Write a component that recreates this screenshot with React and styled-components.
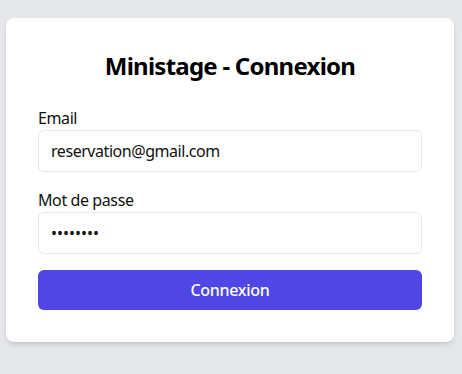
import React, { useState } from 'react';
import styled, { createGlobalStyle } from 'styled-components';

const GlobalStyle = createGlobalStyle`
    html, body {
        margin: 0;
        padding: 0;
        background: #e5e7eb;
        font-family: "Noto Sans", "Open Sans", sans-serif;
        color: #111827;
    }
    * {
        box-sizing: border-box;
    }
`;

const Page = styled.div`
    min-height: 374px;
    padding: 18px 8px 0 6px;
`;

const Card = styled.form`
    width: 448px;
    background: #ffffff;
    border-radius: 8px;
    box-shadow: 0 4px 6px -1px rgba(0, 0, 0, 0.1), 0 2px 4px -2px rgba(0, 0, 0, 0.1);
    padding: 32px;
`;

const Title = styled.h2`
    margin: 0 0 24px;
    font-size: 24px;
    line-height: 32px;
    font-weight: 700;
    letter-spacing: -0.75px;
    text-align: center;
    color: #000;
`;

const Field = styled.div`
    display: flex;
    flex-direction: column;
    margin-bottom: 16px;
`;

const Label = styled.label`
    font-size: 16px;
    line-height: 24px;
    letter-spacing: -0.4px;
    color: #111;
`;

const Input = styled.input`
    width: 100%;
    padding: 8px 12px;
    font: inherit;
    font-size: 16px;
    line-height: 24px;
    letter-spacing: ${p => (p.type === 'password' ? '0' : '-0.45px')};
    height: 42px;
    color: #111;
    border: 1px solid #e5e7eb;
    border-radius: 6px;
    outline: none;
    background: #fff;
`;

const Button = styled.button`
    width: 100%;
    height: 40px;
    border: none;
    border-radius: 6px;
    background: #4f46e5;
    color: #fff;
    font: inherit;
    font-size: 16px;
    font-weight: 500;
    letter-spacing: -0.3px;
    cursor: pointer;
`;

export default function App() {
    const [email, setEmail] = useState('reservation@gmail.com');
    const [password, setPassword] = useState('password');

    return (
        <>
            <GlobalStyle />
            <Page>
                <Card onSubmit={e => e.preventDefault()}>
                    <Title>Ministage - Connexion</Title>
                    <Field>
                        <Label htmlFor="email">Email</Label>
                        <Input id="email" type="email" value={email} onChange={e => setEmail(e.target.value)} />
                    </Field>
                    <Field>
                        <Label htmlFor="password">Mot de passe</Label>
                        <Input id="password" type="password" value={password} onChange={e => setPassword(e.target.value)} />
                    </Field>
                    <Button type="submit">Connexion</Button>
                </Card>
            </Page>
        </>
    );
}
